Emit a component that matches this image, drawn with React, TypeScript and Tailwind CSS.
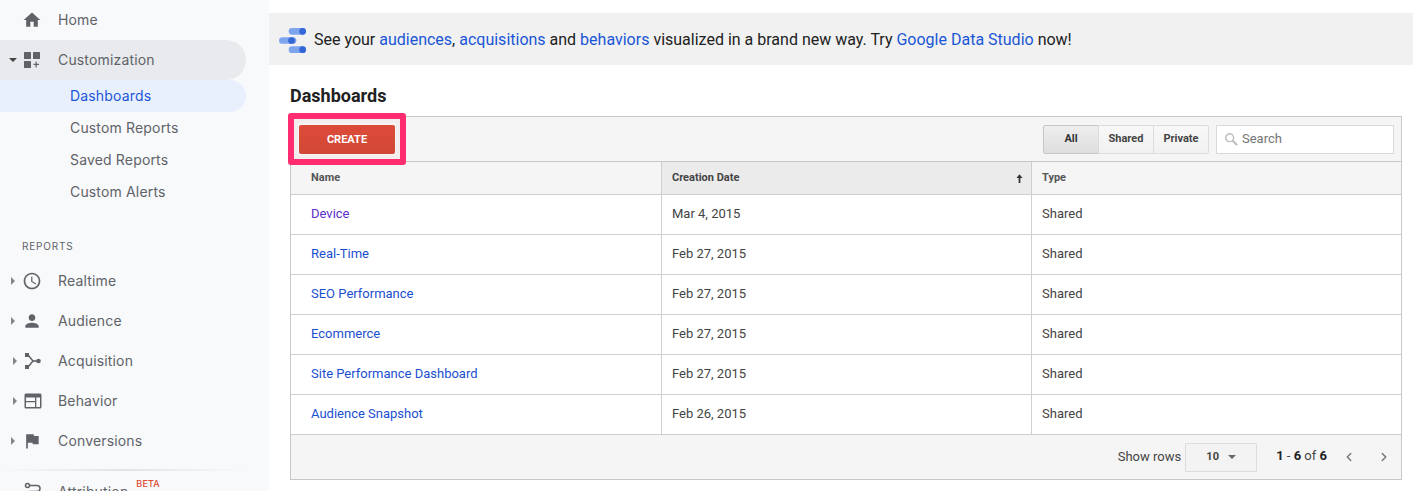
import { ChevronLeft, ChevronRight } from 'lucide-react'

const ICON = 'h-[18px] w-[18px] fill-[#5f6368]'

function HomeIcon() {
  return (
    <svg viewBox="0 0 24 24" className="h-5 w-5 fill-[#5f6368]">
      <path d="M10 20v-6h4v6h5v-8h3L12 3 2 12h3v8z" />
    </svg>
  )
}

function CustomIcon() {
  return (
    <svg viewBox="0 0 16 16" className="h-4 w-4 fill-[#5f6368]">
      <rect x="0" y="0" width="7" height="7" rx="0.5" />
      <rect x="9" y="0" width="7" height="7" rx="0.5" />
      <rect x="0" y="9" width="7" height="7" rx="0.5" />
      <path d="M11.5 9.500h1.200v2.300H15V13h-2.300v2.500h-1.200V13H9.500v-1.200h2z" />
    </svg>
  )
}

function ClockIcon() {
  return (
    <svg viewBox="0 0 24 24" className="h-5 w-5 fill-[#5f6368]">
      <path d="M11.99 2C6.47 2 2 6.48 2 12s4.47 10 9.99 10C17.52 22 22 17.52 22 12S17.52 2 11.99 2zM12 20c-4.42 0-8-3.58-8-8s3.58-8 8-8 8 3.58 8 8-3.58 8-8 8z" />
      <path d="M12.5 7H11v6l5.25 3.15.75-1.23-4.5-2.67z" />
    </svg>
  )
}

function PersonIcon() {
  return (
    <svg viewBox="0 0 24 24" className="h-5 w-5 fill-[#5f6368]">
      <path d="M12 12c2.21 0 4-1.79 4-4s-1.79-4-4-4-4 1.79-4 4 1.79 4 4 4zm0 2c-2.67 0-8 1.34-8 4v2h16v-2c0-2.66-5.33-4-8-4z" />
    </svg>
  )
}

function AcquisitionIcon() {
  return (
    <svg viewBox="0 0 18 18" className={ICON}>
      <rect x="1" y="1" width="4" height="4" />
      <rect x="1" y="13" width="4" height="4" />
      <circle cx="14.5" cy="9" r="2.3" />
      <path d="M4 3l5 6-5 6" fill="none" stroke="#5f6368" strokeWidth="1.5" />
      <path d="M8.5 8.2h5v1.6h-5z" />
    </svg>
  )
}

function BehaviorIcon() {
  return (
    <svg viewBox="0 0 18 18" className={ICON}>
      <path d="M2 1.5h14c.8 0 1.5.7 1.5 1.5v12c0 .8-.7 1.5-1.5 1.5H2c-.8 0-1.500-.7-1.500-1.500V3c0-.8.7-1.500 1.500-1.500zM2 5.500V9h9V5.500zM2 10.200V15h9v-4.800zM12.300 5.500V15H16V5.500z" fillRule="evenodd" />
    </svg>
  )
}

function FlagIcon() {
  return (
    <svg viewBox="0 0 24 24" className="h-5 w-5 fill-[#5f6368]">
      <path d="M14.4 6L14 4H5v17h2v-7h5.600l.4 2h7V6z" />
    </svg>
  )
}

function AttributionIcon() {
  return (
    <svg viewBox="0 0 18 18" className={ICON}>
      <circle cx="3.500" cy="3.500" r="2" fill="none" stroke="#5f6368" strokeWidth="1.500" />
      <path d="M6 3.500h7a3 3 0 0 1 0 6H6a3 3 0 0 0 0 6h9" fill="none" stroke="#5f6368" strokeWidth="1.500" />
    </svg>
  )
}

function Caret({ open }: { open?: boolean }) {
  if (open) return <span className="h-0 w-0 border-x-[4px] border-t-[4px] border-x-transparent border-t-[#444]" />
  return <span className="h-0 w-0 border-y-[4px] border-l-[4px] border-y-transparent border-l-[#80868b]" />
}

const reports = [
  { label: 'Realtime', icon: <ClockIcon /> },
  { label: 'Audience', icon: <PersonIcon /> },
  { label: 'Acquisition', icon: <AcquisitionIcon /> },
  { label: 'Behavior', icon: <BehaviorIcon /> },
  { label: 'Conversions', icon: <FlagIcon /> },
]

function Sidebar() {
  const sub = 'flex h-8 items-center pb-[2px] pl-[70px]'
  return (
    <aside className="w-[269px] shrink-0 bg-[#f8f9fb] pr-[23px] font-['Inter',sans-serif] text-[14px] tracking-[0.16px] text-[#5f6368]">
      <div className="flex h-10 items-center">
        <span className="flex w-[58px] justify-end pr-[16px]"><HomeIcon /></span>
        <span className="mb-[2px]">Home</span>
      </div>
      <div className="flex h-10 items-center rounded-r-[20px] bg-[#e8eaed]">
        <span className="flex w-[58px] items-center justify-end gap-[7px] pr-[18px]"><Caret open /><CustomIcon /></span>
        <span className="mb-[2px]">Customization</span>
      </div>
      <div className={`${sub} rounded-r-[16px] bg-[#e8f0fe] text-[#1a56d6]`}>Dashboards</div>
      <div className={sub}>Custom Reports</div>
      <div className={sub}>Saved Reports</div>
      <div className={sub}>Custom Alerts</div>
      <div className="flex h-[53px] items-end pb-[7px] pl-[22px] text-[10px] tracking-[0.8px]">REPORTS</div>
      {reports.map((item) => (
        <div key={item.label} className="flex h-10 items-center">
          <span className="flex w-[58px] items-center justify-end gap-[7px] pr-[16px]"><Caret />{item.icon}</span>
          <span className="mb-[2px]">{item.label}</span>
        </div>
      ))}
      <div className="mt-[8px] h-[2px] bg-gradient-to-r from-[#f8f9fb] via-[#e2e3e5] to-[#f8f9fb]" />
      <div className="flex h-10 items-center">
        <span className="flex w-[58px] justify-end pr-[16px]"><AttributionIcon /></span>
        <span className="mt-[1px]">Attribution</span>
        <span className="mb-[14px] ml-[8px] text-[9px] font-medium text-[#e0472f]">BETA</span>
      </div>
    </aside>
  )
}

function StudioLogo() {
  return (
    <svg viewBox="0 0 28 26" className="mt-[2px] h-[25px] w-[27px]">
      <rect x="10" y="0" width="18" height="7" rx="3.500" fill="#7fa4ee" />
      <circle cx="24.500" cy="3.500" r="3.500" fill="#3367d6" />
      <rect x="0" y="9.500" width="18" height="7" rx="3.500" fill="#7fa4ee" />
      <circle cx="13" cy="13" r="3.500" fill="#3367d6" />
      <rect x="10" y="19" width="18" height="7" rx="3.500" fill="#7fa4ee" />
      <circle cx="24.500" cy="22.500" r="3.500" fill="#3367d6" />
    </svg>
  )
}

function Banner() {
  const link = 'text-[#1a56d6]'
  return (
    <div className="mt-[13px] flex h-[52px] items-center gap-[8px] bg-[#f1f1f1] pl-[10px] text-[16px] text-[#212121]">
      <StudioLogo />
      <p className="mt-[2px]">
        See your <span className={link}>audiences</span>, <span className={link}>acquisitions</span> and{' '}
        <span className={link}>behaviors</span> visualized in a brand new way. Try{' '}
        <span className={link}>Google Data Studio</span> now!
      </p>
    </div>
  )
}

function Toolbar() {
  const tab = 'flex h-[29px] w-[56px] items-center justify-center border text-[11px] font-bold'
  const idle = 'ml-[-1px] border-[#dcdcdc] bg-gradient-to-b from-[#f8f8f8] to-[#f1f1f1] text-[#444]'
  return (
    <div className="relative flex h-[45px] items-center border-b border-[#c8c8c8] bg-[#f5f5f5] pl-[8px] pr-[7px]">
      <button className="h-[29px] w-[96px] rounded-[2px] bg-gradient-to-b from-[#dd4b39] to-[#d14836] pt-[2px] text-[11px] font-bold text-white">CREATE</button>
      {/* pink callout drawn over the button */}
      <span className="absolute left-[-3px] top-[-4px] h-[52px] w-[118px] rounded-[3px] border-[6px] border-[#ff2d6f] shadow-[inset_0_0_0_4px_#f3eeee]" />
      <div className="ml-auto flex">
        <span className={`${tab} rounded-l-[2px] border-[#c6c6c6] bg-gradient-to-b from-[#eeeeee] to-[#dedede] text-[#333]`}>All</span>
        <span className={`${tab} ${idle}`}>Shared</span>
        <span className={`${tab} ${idle} rounded-r-[2px]`}>Private</span>
      </div>
      <label className="ml-[7px] flex h-[29px] w-[178px] items-center gap-[4px] border border-[#d9d9d9] bg-white pl-[7px]">
        <svg viewBox="0 0 16 16" className="h-[14px] w-[14px] fill-none stroke-[#bdbdbd] stroke-[1.7]">
          <circle cx="6.500" cy="6.500" r="4.500" />
          <path d="M10 10l5 5" strokeWidth="2.400" />
        </svg>
        <span className="text-[13px] text-[#757575]">Search</span>
      </label>
    </div>
  )
}

const rows = [
  { name: 'Device', date: 'Mar 4, 2015', visited: true },
  { name: 'Real-Time', date: 'Feb 27, 2015' },
  { name: 'SEO Performance', date: 'Feb 27, 2015' },
  { name: 'Ecommerce', date: 'Feb 27, 2015' },
  { name: 'Site Performance Dashboard', date: 'Feb 27, 2015' },
  { name: 'Audience Snapshot', date: 'Feb 26, 2015' },
]

function DashboardTable() {
  return (
    <div className="text-[13px] text-[#444]">
      <div className="grid h-[33px] grid-cols-[371px_370px_1fr] border-b border-[#cfcfcf] bg-[#f5f5f5] text-[11px] font-bold text-[#555]">
        <div className="flex items-center border-r border-[#cfcfcf] pl-[20px]">Name</div>
        <div className="flex items-center justify-between border-r border-[#cfcfcf] bg-[#ebebeb] pl-[10px] pr-[8px] text-[#444]">
          Creation Date
          <svg viewBox="0 0 8 10" className="h-[9px] w-[7px] fill-[#333]"><path d="M4 0l3.500 4.500H5V10H3V4.500H.5z" /></svg>
        </div>
        <div className="flex items-center pl-[10px]">Type</div>
      </div>
      {rows.map((row) => (
        <div key={row.name} className="grid h-10 grid-cols-[371px_370px_1fr] border-b border-[#cfcfcf] bg-white">
          <div className={`flex items-center border-r border-[#cfcfcf] pb-[2px] pl-[20px] ${row.visited ? 'text-[#5b2fc9]' : 'text-[#1a4fd0]'}`}>{row.name}</div>
          <div className="flex items-center border-r border-[#cfcfcf] pb-[2px] pl-[10px]">{row.date}</div>
          <div className="flex items-center pb-[2px] pl-[10px]">Shared</div>
        </div>
      ))}
    </div>
  )
}

function Footer() {
  return (
    <div className="flex h-[44px] items-center justify-end bg-[#f5f5f5] pr-[10px] text-[13px] text-[#444]">
      <span>Show rows</span>
      <span className="ml-[4px] flex h-[29px] w-[72px] items-center justify-center gap-[9px] rounded-[1px] border border-[#dcdcdc] bg-[#f3f3f3] text-[11px] font-bold">
        10
        <span className="h-0 w-0 border-x-[4px] border-t-[4px] border-x-transparent border-t-[#666]" />
      </span>
      <span className="mb-[2px] ml-[19px] text-[13px]"><b className="font-bold text-[#222]">1</b> - <b className="font-bold text-[#222]">6</b> of <b className="font-bold text-[#222]">6</b></span>
      <ChevronLeft className="ml-[15px] h-[14px] w-[14px] text-[#777]" strokeWidth={2.5} />
      <ChevronRight className="ml-[21px] h-[14px] w-[14px] text-[#777]" strokeWidth={2.5} />
    </div>
  )
}

export default function App() {
  return (
    <div className="flex h-[491px] w-[1413px] overflow-hidden bg-white font-['Roboto',sans-serif]">
      <Sidebar />
      <main className="flex-1">
        <div className="bg-[#f8f9fb]"><Banner /></div>
        <div className="pl-[21px] pr-[11px]">
          <h1 className="mt-[20px] text-[18px] leading-[22px] font-bold text-[#212121]">Dashboards</h1>
          <div className="mt-[9px] border border-[#c8c8c8]">
            <Toolbar />
            <DashboardTable />
            <Footer />
          </div>
        </div>
      </main>
    </div>
  )
}
